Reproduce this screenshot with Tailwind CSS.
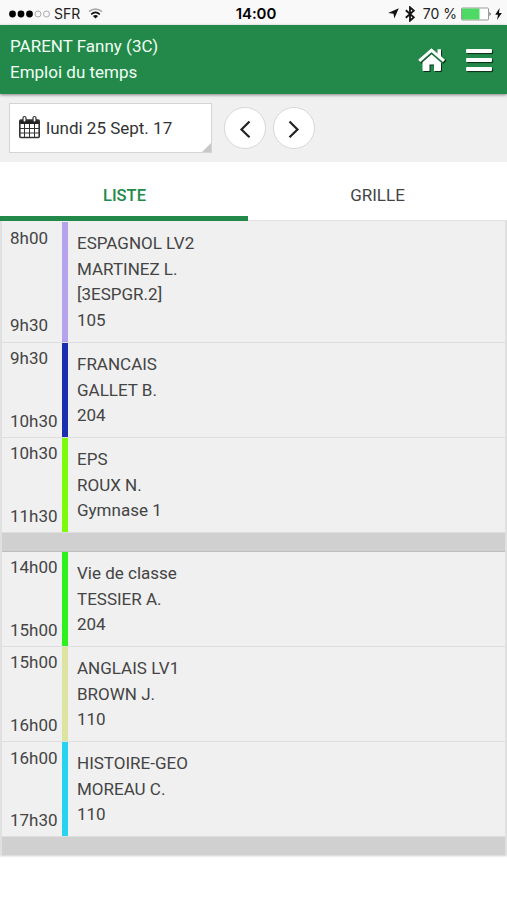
<!DOCTYPE html>
<html lang="fr">
<head>
  <meta charset="UTF-8">
  <meta name="viewport" content="width=device-width, initial-scale=1.0">
  <title>Emploi du temps</title>
  <script src="https://cdn.jsdelivr.net/npm/@tailwindcss/browser@4"></script>
</head>
<body class="bg-white font-[Roboto,sans-serif] text-[17px] leading-[25.67px] text-[#444444]">
  <div class="w-[507px] h-[900px] overflow-hidden flex flex-col">
    <!-- status bar -->
    <div class="h-[25px] shrink-0 bg-[#f9f9f9] grid grid-cols-3 items-center pl-[9px] pr-[5px] pt-[2px] font-[Inter,sans-serif] text-[14px] leading-none text-[#222222]">
      <div class="flex items-center">
        <svg class="w-[42px] h-[8px] mr-[3px]" viewBox="0 0 42 8">
          <g fill="#000"><circle cx="3.5" cy="4" r="3.4"/><circle cx="12" cy="4" r="3.4"/><circle cx="20.5" cy="4" r="3.4"/></g>
          <g fill="none" stroke="#999" stroke-width=".8"><circle cx="29" cy="4" r="3"/><circle cx="37.5" cy="4" r="3"/></g>
        </svg>
        <span>SFR</span>
        <svg class="w-[15px] h-[11px] ml-[8px]" viewBox="0 0 15 11" fill="none" stroke-width="1.6">
          <path d="M1 3.7C4.700.2 10.300.2 14 3.700" stroke="#aaa"/>
          <path d="M3.200 6.300C5.800 4 9.200 4 11.800 6.300" stroke="#111"/>
          <path d="M4.900 7.900C6.500 6.600 8.500 6.600 10.100 7.900L7.500 10.600Z" fill="#111"/>
        </svg>
      </div>
      <div class="text-center font-semibold text-[15px] text-black pl-[1px] tracking-[-0.1px]">14:00</div>
      <div class="flex items-center justify-end">
        <svg class="w-[11px] h-[11px] mr-[6px]" viewBox="0 0 11 11"><path d="M10.800.2 6.300 10.600 5.500 5.700.2 4.900Z" fill="#111"/></svg>
        <svg class="w-[10px] h-[16px] mr-[8px]" viewBox="0 0 10 16" fill="none" stroke="#111" stroke-width="1.800"><path d="M.8 4.300 8.800 11.300 5 14.700V1.300L8.800 4.700.8 11.700"/></svg>
        <span class="whitespace-nowrap mr-[4px] text-[14px]">70 %</span>
        <svg class="w-[31px] h-[14px]" viewBox="0 0 31 14"><rect x=".5" y="1" width="27" height="12" rx="1" fill="#fff" stroke="#999"/><path d="M1 1.500H18.500V12.500H1Z" fill="#4cd964"/><path d="M28.500 5Q31 7 28.500 9Z" fill="#555"/></svg>
        <svg class="w-[7px] h-[12px] ml-[3px]" viewBox="0 0 7 12"><path d="M4.600 0 .2 6.800H3L2 12 6.800 4.900H4Z" fill="#111"/></svg>
      </div>
    </div>

    <header class="h-[69px] shrink-0 relative z-10 bg-[#23894a] text-[#f0fff4] flex justify-between pl-[10px] pr-[15px] pt-[9px] shadow-[0_1px_3px_rgba(0,0,0,0.45)]">
      <div>
        <div>PARENT Fanny (3C)</div>
        <div>Emploi du temps</div>
      </div>
      <div class="flex pt-[13px]">
        <svg class="w-[30px] h-[27px] mr-[19px] drop-shadow-[1px_1px_0px_rgba(0,0,0,0.65)]" viewBox="0 0 30 27" fill="#fff">
          <path d="M14.500 7.200 24 15.500V23Q24 24 23 24H17V17.500H12.500V24H6.500Q5.500 24 5.500 23V15.300Z"/>
          <path d="M2.200 14 14.500 3.300 27 14" fill="none" stroke="#23894a" stroke-width="4.600"/>
          <path d="M2.200 13.800 14.500 3.200 27 13.800" fill="none" stroke="#fff" stroke-width="3"/>
          <path d="M20.500 2.200H24V10.500L20.500 8Z"/>
        </svg>
        <div class="flex flex-col gap-[5px] pt-[2px]">
          <div class="w-[26px] h-[4px] rounded-[1px] bg-white shadow-[1px_1px_1px_rgba(0,0,0,0.7)]"></div>
          <div class="w-[26px] h-[4px] rounded-[1px] bg-white shadow-[1px_1px_1px_rgba(0,0,0,0.7)]"></div>
          <div class="w-[26px] h-[4px] rounded-[1px] bg-white shadow-[1px_1px_1px_rgba(0,0,0,0.7)]"></div>
        </div>
      </div>
    </header>

    <!-- date picker -->
    <div class="h-[68px] shrink-0 bg-[#f0f0f0] flex items-start pl-[9px] pt-[9px]">
      <div class="relative w-[203px] h-[50px] bg-white border border-[#d4d4d4] flex items-center pl-[9px] text-[#333333]">
        <svg class="w-[21px] h-[24px] mr-[6px] mb-[2px]" viewBox="0 0 21 24" fill="none" stroke="#333">
          <path d="M1 5H20V9H1Z" fill="#222" stroke="none"/>
          <rect x=".8" y="5" width="19.400" height="17.500" rx="1" stroke-width="1.600"/>
          <path d="M5.500 9V22M10.500 9V22M15.500 9V22M1 13.500H20M1 18H20" stroke-width="1"/>
          <rect x="4" y="1.500" width="3" height="5.500" rx="1.500" fill="#fff" stroke-width="1.200"/>
          <rect x="14" y="1.500" width="3" height="5.500" rx="1.500" fill="#fff" stroke-width="1.200"/>
        </svg>
        <span class="pt-[2px]">lundi 25 Sept. 17</span>
        <svg class="absolute right-0 bottom-0 w-[9px] h-[9px]" viewBox="0 0 9 9"><path d="M9 0V9H0Z" fill="#c8c8c8"/></svg>
      </div>
      <button class="w-[42px] h-[42px] mt-[4px] ml-[12px] rounded-full bg-white border border-[#d8d8d8] flex items-center justify-center">
        <svg class="w-[12px] h-[18px] mt-[1px]" viewBox="0 0 12 18" fill="none" stroke="#222" stroke-width="2.200"><path d="M10.500 1.500 2.500 9.500 10.500 17.200"/></svg>
      </button>
      <button class="w-[42px] h-[42px] mt-[4px] ml-[7px] rounded-full bg-white border border-[#d8d8d8] flex items-center justify-center">
        <svg class="w-[12px] h-[18px] mt-[1px]" viewBox="0 0 12 18" fill="none" stroke="#222" stroke-width="2.200"><path d="M1.500 1.500 9.500 9.500 1.500 17.200"/></svg>
      </button>
    </div>

    <!-- tabs -->
    <div class="h-[59px] shrink-0 flex text-center border-b border-[#e6e6e6]">
      <div class="w-[248px] pt-[21px] pl-px h-[59px] border-b-[5px] border-[#23894a] font-medium text-[16.5px] text-[#23894a]">LISTE</div>
      <div class="flex-1 pt-[21px]">GRILLE</div>
    </div>

    <!-- lessons -->
    <div class="shrink-0 border-x-2 border-[#e0e0e0] bg-[#f0f0f0] pt-px shadow-[0_1px_2px_rgba(0,0,0,0.2)]">
      <div class="flex h-[121px] border-b border-[#dedede]">
        <div class="w-[60px] pl-[8px] pt-[4px] pb-[3px] flex flex-col justify-between"><span>8h00</span><span>9h30</span></div>
        <div class="w-[6px] bg-[#b5a3ec]"></div>
        <div class="pl-[9px] pt-[9px]">ESPAGNOL LV2<br>MARTINEZ L.<br>[3ESPGR.2]<br>105</div>
      </div>
      <div class="flex h-[95px] border-b border-[#dedede]">
        <div class="w-[60px] pl-[8px] pt-[3px] pb-[2px] flex flex-col justify-between"><span>9h30</span><span>10h30</span></div>
        <div class="w-[6px] bg-[#1a2fb0]"></div>
        <div class="pl-[9px] pt-[9px]">FRANCAIS<br>GALLET B.<br>204</div>
      </div>
      <div class="flex h-[95px] border-b border-[#dedede]">
        <div class="w-[60px] pl-[8px] pt-[3px] pb-[2px] flex flex-col justify-between"><span>10h30</span><span>11h30</span></div>
        <div class="w-[6px] bg-[#7cfc0a]"></div>
        <div class="pl-[9px] pt-[9px]">EPS<br>ROUX N.<br>Gymnase 1</div>
      </div>
      <div class="h-[19px] bg-[#d0d0d0] border-b border-[#bebebe]"></div>
      <div class="flex h-[95px] border-b border-[#dedede]">
        <div class="w-[60px] pl-[8px] pt-[3px] pb-[2px] flex flex-col justify-between"><span>14h00</span><span>15h00</span></div>
        <div class="w-[6px] bg-[#2df01c]"></div>
        <div class="pl-[9px] pt-[9px]">Vie de classe<br>TESSIER A.<br>204</div>
      </div>
      <div class="flex h-[95px] border-b border-[#dedede]">
        <div class="w-[60px] pl-[8px] pt-[3px] pb-[2px] flex flex-col justify-between"><span>15h00</span><span>16h00</span></div>
        <div class="w-[6px] bg-[#dde3a0]"></div>
        <div class="pl-[9px] pt-[9px]">ANGLAIS LV1<br>BROWN J.<br>110</div>
      </div>
      <div class="flex h-[95px] border-b border-[#dedede]">
        <div class="w-[60px] pl-[8px] pt-[4px] pb-[2px] flex flex-col justify-between"><span>16h00</span><span>17h30</span></div>
        <div class="w-[6px] bg-[#27d3ee]"></div>
        <div class="pl-[9px] pt-[9px]">HISTOIRE-GEO<br>MOREAU C.<br>110</div>
      </div>
      <div class="h-[18px] bg-[#d0d0d0]"></div>
    </div>
  </div>
</body>
</html>
